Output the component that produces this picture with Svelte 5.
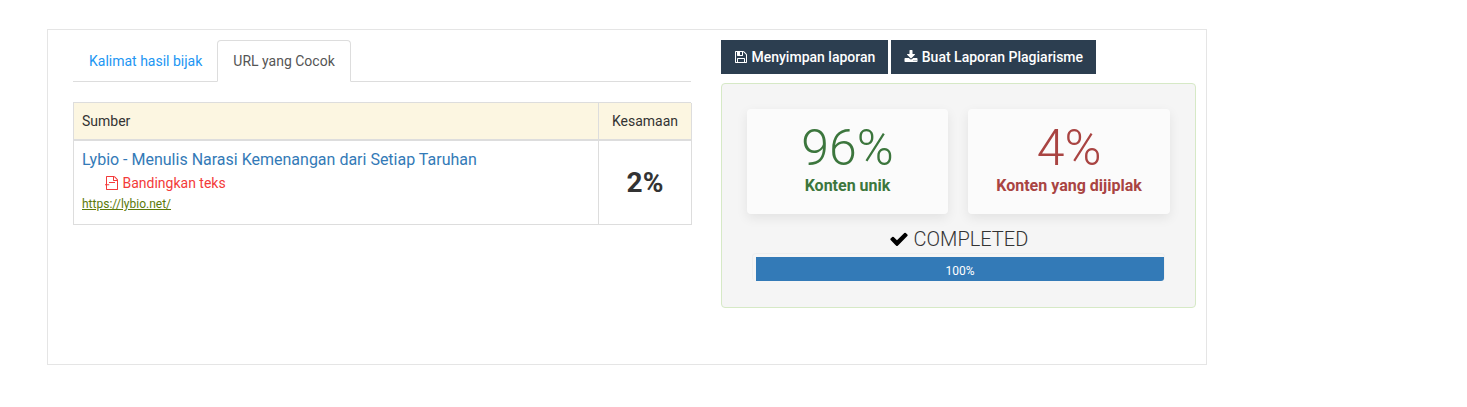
<script>
  const tabs = [
    { label: "Kalimat hasil bijak", active: false },
    { label: "URL yang Cocok", active: true }
  ];
  const stats = [
    { value: "96%", label: "Konten unik", tone: "good" },
    { value: "4%", label: "Konten yang dijiplak", tone: "bad" }
  ];
</script>

<div class="box">
  <section class="left">
    <ul class="tabs">
      {#each tabs as t}
        <li class:active={t.active}>{t.label}</li>
      {/each}
    </ul>

    <div class="table">
      <div class="th source">Sumber</div>
      <div class="th match">Kesamaan</div>
      <div class="td source">
        <a class="title" href="#top">Lybio - Menulis Narasi Kemenangan dari Setiap Taruhan</a>
        <a class="compare" href="#top">
          <svg viewBox="0 0 1792 1792" width="14" height="14"><path d="M1596 380q28 28 48 76t20 88v1152q0 40-28 68t-68 28h-1344q-40 0-68-28t-28-68v-1600q0-40 28-68t68-28h896q40 0 88 20t76 48zm-444-244v376h376q-10-29-22-41l-313-313q-12-12-41-22zm384 1528v-1024h-416q-40 0-68-28t-28-68v-416h-768v1536h1280zm-1024-864q0-14 9-23t23-9h704q14 0 23 9t9 23v64q0 14-9 23t-23 9h-704q-14 0-23-9t-9-23v-64q0-14 9-23t23-9h704zm0 256q14 0 23 9t9 23v64q0 14-9 23t-23 9h-704q-14 0-23-9t-9-23v-64q0-14 9-23t23-9h704z" /></svg>
          Bandingkan teks
        </a>
        <a class="url" href="#top">https://lybio.net/</a>
      </div>
      <div class="td match percent">2%</div>
    </div>
  </section>

  <section class="right">
    <div class="actions">
      <button>
        <svg viewBox="0 0 1792 1792" width="14" height="14"><path d="M512 1536h768v-384h-768v384zm896 0h128v-896q0-14-10-38.500t-20-34.500l-281-281q-10-10-34-20t-39-10v416q0 40-28 68t-68 28h-576q-40 0-68-28t-28-68v-416h-128v1280h128v-416q0-40 28-68t68-28h832q40 0 68 28t28 68v416zm-384-928v-320q0-13-9.500-22.500t-22.500-9.500h-192q-13 0-22.500 9.500t-9.500 22.500v320q0 13 9.500 22.500t22.500 9.500h192q13 0 22.500-9.500t9.500-22.500zm640 32v928q0 40-28 68t-68 28h-1344q-40 0-68-28t-28-68v-1344q0-40 28-68t68-28h928q40 0 88 20t76 48l280 280q28 28 48 76t20 88z" /></svg>
        Menyimpan laporan
      </button>
      <button>
        <svg viewBox="0 0 1792 1792" width="14" height="14"><path d="M1344 1344q0-26-19-45t-45-19-45 19-19 45 19 45 45 19 45-19 19-45zm256 0q0-26-19-45t-45-19-45 19-19 45 19 45 45 19 45-19 19-45zm128-224v320q0 40-28 68t-68 28h-1472q-40 0-68-28t-28-68v-320q0-40 28-68t68-28h465l135 136q58 56 136 56t136-56l136-136h464q40 0 68 28t28 68zm-325-569q17 41-14 70l-448 448q-18 19-45 19t-45-19l-448-448q-31-29-14-70 17-39 59-39h256v-448q0-26 19-45t45-19h256q26 0 45 19t19 45v448h256q42 0 59 39z" /></svg>
        Buat Laporan Plagiarisme
      </button>
    </div>

    <div class="panel">
      <div class="stats">
        {#each stats as s}
          <div class="stat {s.tone}">
            <div class="value">{s.value}</div>
            <div class="label">{s.label}</div>
          </div>
        {/each}
      </div>
      <div class="status">
        <svg viewBox="0 0 1792 1792" width="20" height="20"><path d="M1671 566q0 40-28 68l-724 724-136 136q-28 28-68 28t-68-28l-136-136-362-362q-28-28-28-68t28-68l136-136q28-28 68-28t68 28l294 295 656-657q28-28 68-28t68 28l136 136q28 28 28 68z" /></svg>
        COMPLETED
      </div>
      <div class="progress"><div class="bar" style="width:100%">100%</div></div>
    </div>
  </section>
</div>

<style>
  :global(body) {
    margin: 0;
    background: #fff;
    font-family: Roboto, "Liberation Sans", sans-serif;
    font-size: 14px;
    color: #333;
  }
  a { text-decoration: none; }
  svg { fill: currentColor; vertical-align: -2px; }

  .box {
    box-sizing: border-box;
    display: flex;
    width: 1160px;
    height: 336px;
    margin: 29px 0 0 47px;
    padding: 10px 10px 0 25px;
    border: 1px solid #e5e5e5;
  }

  .left { width: 618px; margin-right: 30px; }

  .tabs {
    display: flex;
    height: 42px;
    margin: 0 0 20px;
    padding: 0;
    list-style: none;
    border-bottom: 1px solid #ddd;
    box-sizing: border-box;
  }
  .tabs li {
    box-sizing: border-box;
    height: 42px;
    padding: 11px 15px 0 16px;
    line-height: 20px;
    color: #2196f3;
  }
  .tabs li.active {
    color: #555;
    background: #fff;
    border: 1px solid #ddd;
    border-bottom-color: #fff;
    border-radius: 4px 4px 0 0;
    padding: 10px 15px 0;
  }

  .table {
    display: grid;
    grid-template-columns: 525px 93px;
    grid-template-rows: 38px 84px;
    box-sizing: border-box;
    width: 618px;
    border-top: 1px solid #ddd;
    border-left: 1px solid #ddd;
  }
  .th, .td { box-sizing: border-box; border-right: 1px solid #ddd; border-bottom: 1px solid #ddd; }
  .th {
    display: flex;
    align-items: center;
    padding: 0 8px;
    background: #fcf6e1;
    border-bottom-width: 2px;
  }
  .th.match { justify-content: center; padding: 0; }
  .td.source { display: flex; flex-direction: column; align-items: flex-start; padding: 9px 8px 0; }
  .title { font-size: 16px; line-height: 20px; color: #337ab7; }
  .compare { margin: 3px 0 0 23px; line-height: 20px; color: #f33a3a; }
  .url { margin-top: 3px; font-size: 12px; line-height: 17px; color: #5c7a0a; text-decoration: underline; }
  .percent {
    display: flex;
    align-items: center;
    justify-content: center;
    font-size: 28px;
    font-weight: 700;
  }

  .right { width: 475px; }

  .actions { display: flex; gap: 3px; margin-bottom: 9px; }
  button {
    height: 34px;
    padding: 0 13px;
    border: 0;
    background: #2c3e50;
    color: #fff;
    font: 500 14px Roboto, "Liberation Sans", sans-serif;
  }

  .panel {
    box-sizing: border-box;
    height: 225px;
    padding: 25px 25px 0;
    background: #f5f5f5;
    border: 1px solid #d6e9c6;
    border-radius: 4px;
  }
  .stats { display: grid; grid-template-columns: 201px 202px; gap: 20px; }
  .stat {
    height: 105px;
    padding-top: 12px;
    box-sizing: border-box;
    text-align: center;
    background: #fbfbfb;
    border-radius: 4px;
    box-shadow: 0 4px 12px rgba(0, 0, 0, .08);
  }
  .value { font-size: 50px; font-weight: 300; line-height: 55px; }
  .label { font-size: 16px; font-weight: 700; line-height: 20px; }
  .good { color: #3c763d; }
  .bad { color: #a94442; }

  .status {
    margin-top: 13px;
    text-align: center;
    font-size: 20px;
    font-weight: 300;
    line-height: 24px;
  }
  .status svg { fill: #000; vertical-align: -3px; }

  .progress {
    box-sizing: border-box;
    width: 413px;
    height: 28px;
    margin: 2px 0 0 5px;
    padding: 3px 0 0 3px;
    background: #f5f5f5;
    border: 1px solid #eee;
    border-bottom: 0;
    border-radius: 4px;
  }
  .bar {
    height: 24px;
    background: #337ab7;
    color: #fff;
    font-size: 12px;
    font-weight: 400;
    line-height: 28px;
    text-align: center;
    border-radius: 0 0 3px 0;
  }
</style>
